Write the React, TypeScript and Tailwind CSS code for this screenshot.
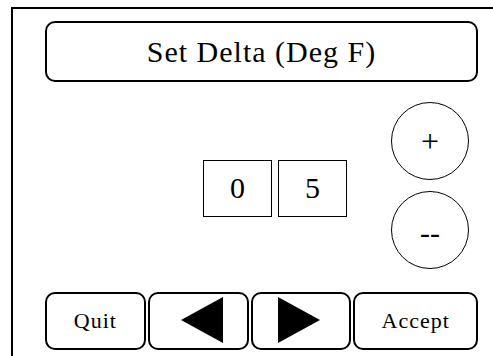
import React, { useState } from 'react';

const serif = "font-[family-name:'Liberation_Serif','Times_New_Roman',serif]";

/** Left / right pointing solid triangle for the cursor buttons */
const Arrow: React.FC<{ dir: 'left' | 'right' }> = ({ dir }) => (
  <svg width="43" height="46" viewBox="0 0 43 46" className="block">
    {dir === 'left' ? (
      <polygon points="0,23 42,0 42,46" fill="black" />
    ) : (
      <polygon points="1,0 43,23 1,46" fill="black" />
    )}
  </svg>
);

export default function App() {
  const [digits, setDigits] = useState([0, 5]);
  const [cursor, setCursor] = useState(1);

  const bump = (d: number) =>
    setDigits((prev) => prev.map((v, i) => (i === cursor ? (v + d + 10) % 10 : v)));

  return (
    <div className={`w-[493px] h-[356px] overflow-hidden bg-white text-black ${serif}`}>
      {/* Screen frame: only top and left edges fall inside the window */}
      <div className="ml-[11px] mt-[7px] w-[520px] h-[360px] border-l-2 border-t-2 border-black pl-[32px] pt-[12px]">
        {/* Title */}
        <div className="w-[433px] h-[61px] rounded-[10px] border-2 border-black flex items-center justify-center">
          <span className="text-[30px] leading-none tracking-[1px]">Set Delta (Deg F)</span>
        </div>

        {/* Digits + up/down */}
        <div className="flex items-center h-[210px]">
          <div className="ml-[158px] flex gap-[6px] mt-[2px]">
            {digits.map((d, i) => (
              <div
                key={i}
                onClick={() => setCursor(i)}
                className="w-[69px] h-[57px] border-[1.5px] border-black flex items-center justify-center text-[30px] leading-none"
              >
                {d}
              </div>
            ))}
          </div>
          <div className="ml-[44px] flex flex-col gap-[11px] -mt-[3px]">
            <button
              onClick={() => bump(1)}
              className="w-[78px] h-[78px] rounded-full border-[1.5px] border-black flex items-center justify-center text-[32px] leading-none"
            >
              +
            </button>
            <button
              onClick={() => bump(-1)}
              className="w-[78px] h-[78px] rounded-full border-[1.5px] border-black flex items-center justify-center text-[30px] leading-none pt-[6px]"
            >
              --
            </button>
          </div>
        </div>

        {/* Bottom buttons */}
        <div className="flex gap-[2px] w-[433px]">
          <button className="w-[101px] h-[58px] rounded-[10px] border-2 border-black flex items-center justify-center text-[22px] tracking-[1px] leading-none">
            Quit
          </button>
          <button
            onClick={() => setCursor(Math.max(0, cursor - 1))}
            className="w-[101px] h-[58px] rounded-[10px] border-2 border-black flex items-center justify-center pl-[9px] pb-[3px]"
          >
            <Arrow dir="left" />
          </button>
          <button
            onClick={() => setCursor(Math.min(digits.length - 1, cursor + 1))}
            className="w-[101px] h-[58px] rounded-[10px] border-2 border-black flex items-center justify-center pr-[4px] pb-[3px]"
          >
            <Arrow dir="right" />
          </button>
          <button className="w-[125px] h-[58px] rounded-[10px] border-2 border-black flex items-center justify-center text-[22px] tracking-[1px] leading-none">
            Accept
          </button>
        </div>
      </div>
    </div>
  );
}
